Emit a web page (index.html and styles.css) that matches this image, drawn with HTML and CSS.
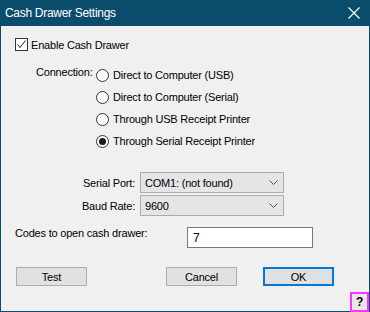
FILE: index.html
```html
<!DOCTYPE html>
<html lang="en">

<head>
  <meta charset="UTF-8">
  <title>Cash Drawer Settings</title>
  <link rel="stylesheet" href="styles.css">
</head>

<body>
  <div class="window">
    <div class="titlebar">
      <span class="title">Cash Drawer Settings</span>
      <svg class="close" width="12" height="12" viewBox="0 0 12 12">
        <path d="M0.5 0.5 L11.5 11.5 M11.5 0.5 L0.5 11.5" stroke="#fff" stroke-width="1.2" fill="none" />
      </svg>
    </div>
    <div class="content">
      <label class="check-row">
        <span class="checkbox">
          <svg width="11" height="11" viewBox="0 0 11 11">
            <path d="M1.5 5.5 L4 8.5 L9.5 1.5" stroke="#444" stroke-width="1.1" fill="none" />
          </svg>
        </span>
        Enable Cash Drawer
      </label>

      <div class="connection">
        <span class="connection-label">Connection:</span>
        <div class="radios">
          <label class="radio-row"><span class="radio"></span>Direct to Computer (USB)</label>
          <label class="radio-row"><span class="radio"></span>Direct to Computer (Serial)</label>
          <label class="radio-row"><span class="radio"></span>Through USB Receipt Printer</label>
          <label class="radio-row"><span class="radio checked"></span>Through Serial Receipt Printer</label>
        </div>
      </div>

      <div class="port-grid">
        <span class="field-label">Serial Port:</span>
        <div class="select">
          <span>COM1: (not found)</span>
          <svg width="9" height="6" viewBox="0 0 9 6">
            <path d="M0.5 0.5 L4.5 4.5 L8.5 0.5" stroke="#555" stroke-width="1" fill="none" />
          </svg>
        </div>
        <span class="field-label">Baud Rate:</span>
        <div class="select">
          <span>9600</span>
          <svg width="9" height="6" viewBox="0 0 9 6">
            <path d="M0.5 0.5 L4.5 4.5 L8.5 0.5" stroke="#555" stroke-width="1" fill="none" />
          </svg>
        </div>
      </div>

      <div class="codes-row">
        <span class="codes-label">Codes to open cash drawer:</span>
        <div class="textbox">7</div>
      </div>

      <div class="buttons">
        <button class="btn btn-test">Test</button>
        <button class="btn btn-cancel">Cancel</button>
        <button class="btn btn-ok">OK</button>
      </div>

      <div class="help-row">
        <span class="help">?</span>
      </div>
    </div>
  </div>
</body>

</html>
```

FILE: styles.css
```css
* {
  box-sizing: border-box;
}

body {
  margin: 0;
  font-family: "Liberation Sans", Arial, sans-serif;
  font-size: 11px;
  letter-spacing: -0.2px;
  color: #000;
}

.window {
  width: 370px;
  height: 312px;
  background-color: #f0f0f0;
  border: 1px solid #0a4c6c;
  border-top: none;
}

.titlebar {
  height: 26px;
  margin: 0 -1px;
  padding: 0 10px 0 5px;
  background-color: #0a4c6c;
  color: #fff;
  display: flex;
  align-items: center;
  justify-content: space-between;
}

.title {
  font-size: 12px;
  letter-spacing: -0.3px;
}

.close {
  margin-bottom: 1px;
}

.content {
  padding-left: 14px;
}

.check-row {
  margin-top: 12px;
  height: 13px;
  display: flex;
  align-items: center;
  gap: 3px;
}

.checkbox {
  width: 13px;
  height: 13px;
  border: 1px solid #333;
  background-color: #fff;
  display: flex;
  align-items: center;
  justify-content: center;
}

.connection {
  margin-top: 13px;
  margin-left: 21px;
  display: flex;
}

.connection-label {
  width: 60px;
  padding-top: 2px;
}

.radios {
  display: flex;
  flex-direction: column;
}

.radio-row {
  height: 22px;
  display: flex;
  align-items: center;
  gap: 4px;
}

.radio {
  width: 13px;
  height: 13px;
  border: 1px solid #333;
  border-radius: 50%;
  background-color: #fff;
  display: flex;
  align-items: center;
  justify-content: center;
}

.radio.checked::after {
  content: "";
  width: 7px;
  height: 7px;
  border-radius: 50%;
  background-color: #1a1a1a;
}

.port-grid {
  margin-top: 20px;
  display: grid;
  grid-template-columns: 120px 144px;
  column-gap: 5px;
  row-gap: 2px;
  align-items: center;
}

.field-label {
  text-align: right;
}

.select {
  height: 21px;
  border: 1px solid #adadad;
  background-color: #e5e5e5;
  padding: 0 5px 0 4px;
  display: flex;
  align-items: center;
  justify-content: space-between;
}

.codes-row {
  margin-top: 11px;
  display: flex;
  align-items: flex-start;
}

.codes-label {
  width: 172px;
  line-height: 12px;
}

.textbox {
  width: 126px;
  height: 21px;
  border: 1px solid #7a7a7a;
  background-color: #fff;
  padding-left: 5px;
  font-size: 12px;
  display: flex;
  align-items: center;
}

.buttons {
  margin-top: 19px;
  padding-left: 1px;
  display: flex;
}

.btn {
  width: 71px;
  height: 19px;
  padding: 0;
  border: 1px solid #adadad;
  background-color: #e1e1e1;
  font-family: inherit;
  font-size: 11px;
  letter-spacing: -0.2px;
  color: #000;
}

.btn-cancel {
  margin-left: 79px;
}

.btn-ok {
  margin-left: 26px;
  border: 2px solid #0078d7;
}

.help-row {
  margin-top: 6px;
  display: flex;
  justify-content: flex-end;
}

.help {
  width: 19px;
  height: 20px;
  border: 2px solid #ff33ff;
  background-color: #e8e8e8;
  font-size: 12px;
  font-weight: bold;
  display: flex;
  align-items: center;
  justify-content: center;
}
```
